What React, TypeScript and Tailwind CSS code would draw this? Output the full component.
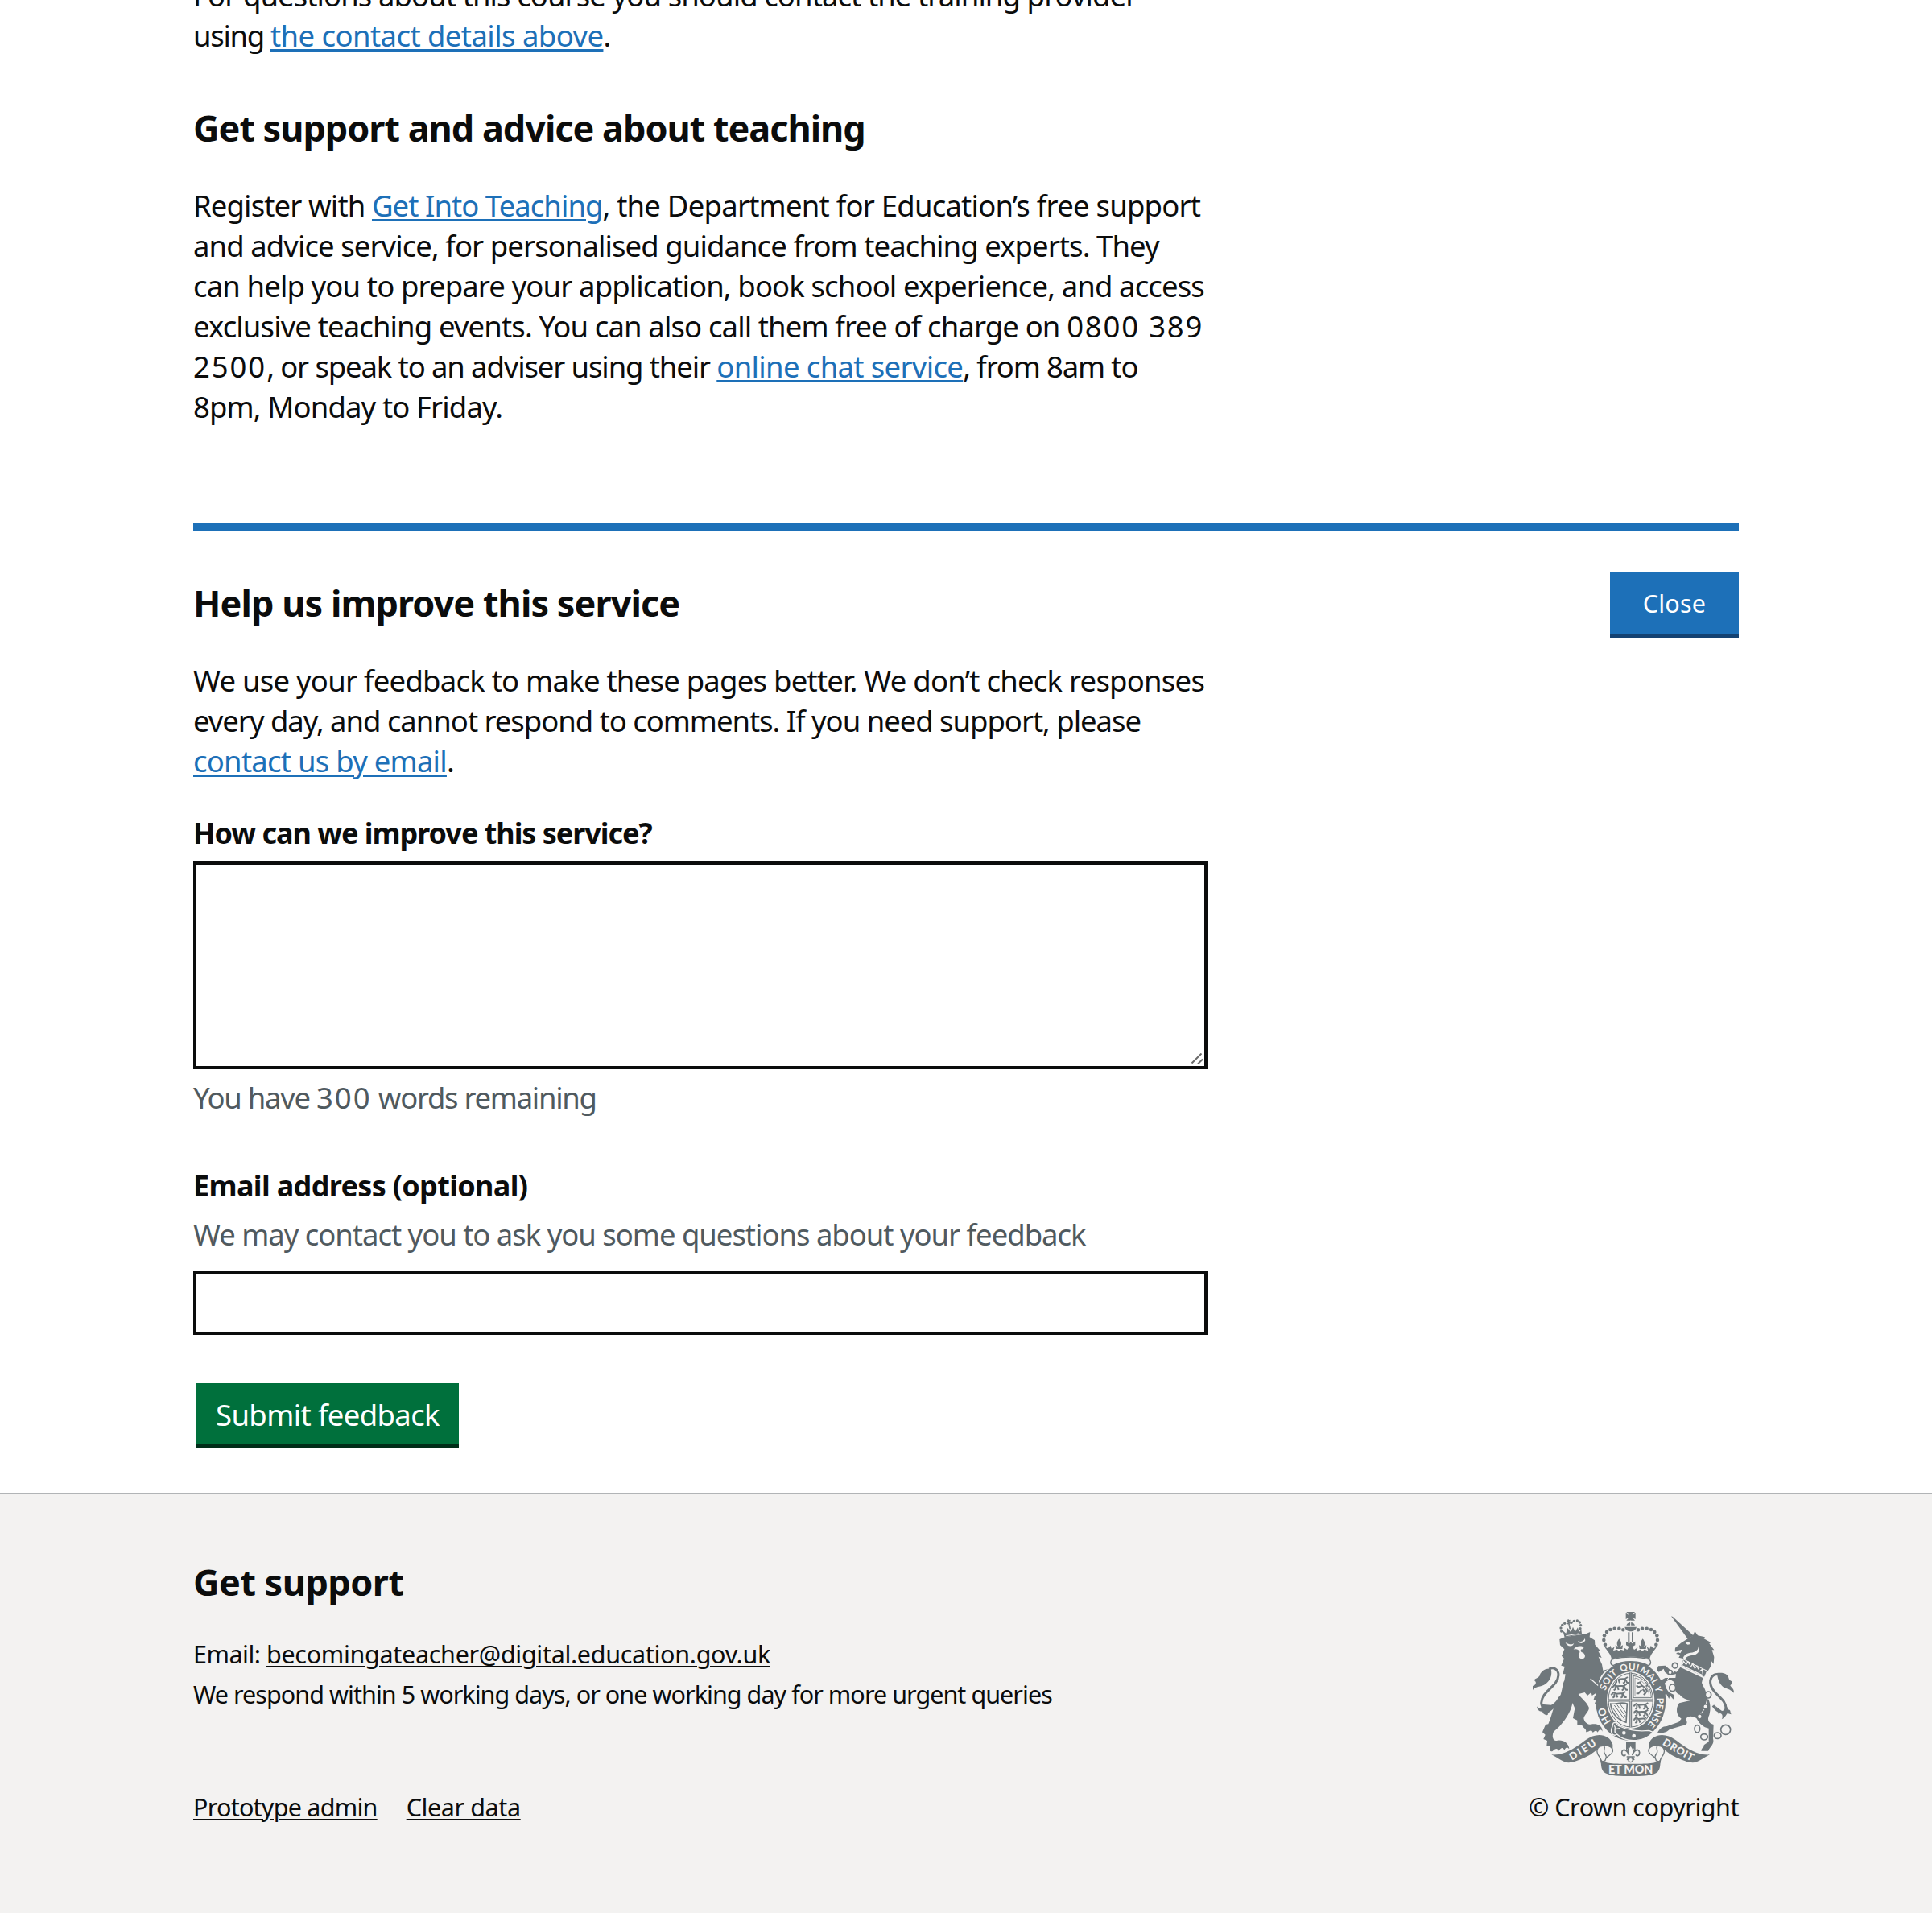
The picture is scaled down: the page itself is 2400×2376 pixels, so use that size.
import type { ReactNode } from "react";

const G = "#6f777b";
const W = "#f3f2f1";

const CROWN_BEADS: [number, number][] = [
  [342, 188], [337, 171], [339, 154], [348, 141], [361, 132], [377, 128], [394, 128], [409, 133],
];

const CHAIN: [number, number, number, number][] = [
  [602, 266, 10, 10], [584, 292, 8, 8], [593, 349, 12, 13], [726, 375, 11, 12], [716, 419, 9, 9],
  [694, 456, 9, 9], [685, 502, 10, 14], [711, 532, 13, 11], [761, 527, 13, 11], [791, 505, 18, 18],
];

function Passant({ x, y }: { x: number; y: number }) {
  return (
    <path
      transform={`translate(${x} ${y})`}
      d="M0 6 l8 -6 l8 5 l26 -2 l10 -6 m-42 8 v11 l-6 4 m14 -13 l4 12 m18 -14 v12 l-6 3 m8 -16 l8 14 l6 0 m-52 -14 l-6 6"
    />
  );
}

function Crest() {
  return (
    <svg width="260" height="210" viewBox="60 60 780 630" fill={G} aria-hidden="true">
      {/* lion: tail */}
      <path d="M175 385 C150 425 105 440 104 405 C106 360 165 345 168 302 C168 280 150 270 133 279" fill="none" stroke={G} strokeWidth="9" />
      <path d="M140 278 C115 275 100 292 98 304 C88 318 74 314 80 324 C88 328 82 340 72 342 L72 358 C76 345 100 345 114 338 C138 325 146 300 140 278 Z" />
      <path d="M104 410 C112 425 90 428 87 418 C88 434 102 440 108 436 C108 446 120 452 128 450 C126 440 150 432 160 415 Z" />
      {/* lion: body */}
      <path d="M172 168 L192 160 L270 148 L286 141 L284 160 L303 172 L304 188 L323 210 L315 210 L329 237 L317 233 L330 262 L334 284 L352 280 C334 292 326 304 318 325 L335 360 L346 404 L340 428 L328 415 L324 424 L312 419 L317 405 L303 411 L307 395 L298 396 L302 383 L312 366 L293 378 L290 366 L276 378 L266 366 L242 372 C252 388 276 404 282 424 C280 440 266 448 262 462 C264 478 280 490 294 484 C310 482 331 486 332 512 C325 500 320 504 314 515 C308 505 302 510 296 516 C290 500 280 515 270 514 C274 500 260 500 256 488 L238 486 L238 470 L222 462 L229 425 L220 405 C216 440 180 490 150 512 C142 530 148 548 160 546 C180 540 207 552 208 577 C200 568 196 570 190 581 C184 568 178 572 168 584 C165 572 156 574 146 585 C136 590 132 576 138 564 L124 564 L126 546 L112 540 L119 524 L108 514 L120 486 L130 484 C148 440 152 400 176 375 C184 350 184 330 190 322 L194 298 L184 298 L191 270 L178 266 L189 240 L180 230 L190 205 L174 190 Z" />
      <path d="M194 180 C208 188 218 190 226 182 L222 190 C212 198 198 192 194 180 Z M240 174 C250 180 262 176 266 165 L268 172 C262 186 246 186 240 174 Z M224 206 C232 194 252 190 262 198 L260 208 C256 200 246 210 254 216 C270 220 272 240 256 241 C240 240 240 222 248 216 C242 204 234 204 224 206 Z" fill={W} />
      <path d="M287 315 L322 346 L332 362" stroke={W} strokeWidth="4" fill="none" />
      {/* lion: crown */}
      <path d="M191 161 L184 136 L196 146 L202 126 L214 142 L222 122 L230 140 L240 124 L245 142 L253 132 L255 148 Z" />
      <path d="M196 155 L244 147" stroke={W} strokeWidth="3" />
      <path d="M199 101 L212 98 M204 94 L208 116 M200 110 L212 107 M208 116 L211 130" stroke={G} strokeWidth="5" />
      {[[179, 138], [177, 126], [182, 115], [191, 109], [216, 106], [226, 100], [238, 99], [247, 105], [251, 116], [249, 128]].map(([x, y]) => (
        <circle key={`${x}-${y}`} cx={x} cy={y} r="5" />
      ))}

      {/* imperial crown */}
      <path d="M421 66 H453 L443 78 L455 71 V93 L443 86 L453 98 H421 L431 86 L419 93 V71 L431 78 Z" />
      <path d="M421 116 A17 17 0 0 1 453 116 Z M415 122 H459 C456 144 418 144 415 122 Z" />
      <path d="M437 98 V118" stroke={W} strokeWidth="3" />
      <path d="M430 142 V178 M444 142 V178" stroke={G} strokeWidth="6" />
      {CROWN_BEADS.map(([x, y]) => (
        <g key={`${x}-${y}`}>
          <circle cx={x} cy={y} r="6.8" />
          <circle cx={874 - x} cy={y} r="6.8" />
        </g>
      ))}
      <path d="M340 196 L352 202 L362 192 L366 204 L377 196 L372 211 L386 206 L394 213 L400 206 L414 211 L411 199 L424 207 L431 196 L420 190 V176 L432 184 L437 176 L442 184 L454 176 V190 L443 196 L450 207 L463 199 L460 211 L474 206 L480 213 L488 206 L502 211 L497 196 L508 204 L512 192 L522 202 L534 196 C526 212 512 220 508 242 C470 230 404 230 366 242 C362 220 348 212 340 196 Z" />
      <path d="M394 166 C404 178 404 190 397 196 L408 190 L406 204 H382 L380 190 L391 196 C384 190 384 178 394 166 Z M482 166 C492 178 492 190 485 196 L496 190 L494 204 H470 L468 190 L479 196 C472 190 472 178 482 166 Z" />

      {/* garter */}
      <ellipse cx="437" cy="397" rx="131" ry="149" />
      <path d="M372 266 C358 262 360 242 376 241 C410 232 464 232 498 241 C514 242 516 262 502 266 C466 246 408 246 372 266 Z" fill={W} stroke={G} strokeWidth="4" />
      <ellipse cx="437" cy="395" rx="89" ry="106" fill={W} />
      <ellipse cx="437" cy="395" rx="83" ry="100" fill="none" stroke={G} strokeWidth="3" />
      <path d="M437 292 V496 M352 396 H522" stroke={G} strokeWidth="9" />
      <path d="M437 292 V496 M352 396 H522" stroke={W} strokeWidth="2" />
      <defs>
        <clipPath id="arms"><ellipse cx="437" cy="395" rx="80" ry="97" /></clipPath>
        <path id="motto" pathLength="100" d="M437 511 A98 114 0 0 1 437 283 A98 114 0 0 1 437 511" />
      </defs>
      <g clipPath="url(#arms)" fill="none" stroke={G} strokeWidth="6" strokeLinejoin="round">
        <Passant x={374} y={312} /><Passant x={370} y={338} /><Passant x={366} y={366} />
        <Passant x={450} y={408} /><Passant x={450} y={434} /><Passant x={450} y={460} />
        <path d="M447 304 V386 H514 C514 350 490 308 447 304 Z" strokeWidth="3" />
        <path d="M453 312 V380 H506 C506 352 484 318 453 312 Z" strokeWidth="2" />
        <path d="M462 332 l10 -4 l6 12 l12 8 l8 12 l-8 12 m-12 -30 l-12 4 l-8 -6 m20 16 l-12 14 l-8 0 m24 -16 l10 12 l-6 10 m10 -32 l6 -10 l-8 -8" />
        <path d="M362 408 C380 412 398 400 424 408 L420 478 C396 470 366 450 362 408 Z" strokeWidth="5" />
        <path d="M376 414 L414 466 M386 412 L418 456 M398 410 L420 442 M370 424 L402 468" strokeWidth="3" />
      </g>
      <g fill={W} fontSize="35" fontWeight="700" fontFamily="Lato, sans-serif" textAnchor="middle">
        <text fontSize="38"><textPath href="#motto" startOffset="17">HO</textPath></text>
        <text><textPath href="#motto" startOffset="36.5">SOIT</textPath></text>
        <text><textPath href="#motto" startOffset="49.3">QUI</textPath></text>
        <text><textPath href="#motto" startOffset="60.6">MAL</textPath></text>
        <text><textPath href="#motto" startOffset="69">Y</textPath></text>
        <text><textPath href="#motto" startOffset="81.5">PENSE</textPath></text>
      </g>
      {/* buckle and strap */}
      <path d="M366 500 C374 488 366 478 378 478 C388 480 384 490 396 492 C430 508 466 512 506 508 L520 514 C490 552 420 556 386 522 C376 530 360 524 366 500 Z" stroke={W} strokeWidth="4" />
      <path d="M376 490 C384 498 374 508 380 518 M376 504 L396 500" stroke={W} strokeWidth="4" fill="none" />
      <circle cx="412" cy="517" r="7" fill={W} />
      <circle cx="449" cy="528" r="7" fill={W} />
      <path d="M302 382 L320 370 L334 366 L348 402 L341 428 L329 418 L322 426 L312 419 L317 407 L303 411 L308 395 Z" />

      {/* unicorn: tail */}
      <path d="M768 299 C735 294 727 325 740 350 C756 380 792 392 792 425 C788 450 760 440 744 415" fill="none" stroke={G} strokeWidth="9" />
      <path d="M758 294 C784 290 800 298 802 312 C806 328 818 318 814 334 L808 340 C812 350 822 350 822 368 C808 352 790 352 780 344 C764 330 762 312 758 294 Z" />
      <path d="M744 410 C760 425 766 436 764 446 C780 438 782 460 776 466 C790 460 792 448 798 444 L812 448 C806 438 812 432 800 430 L794 416 L784 440 Z" />
      {/* unicorn: head */}
      <path d="M588 82 L594 84 L672 155 L650 167 Z" />
      <path d="M650 166 L668 156 L676 138 L687 154 L714 160 L710 166 L736 180 L730 184 L748 208 L740 208 L748 234 L746 260 L738 250 L735 270 L724 288 L632 240 L616 236 L622 226 L606 222 L616 214 L602 214 L603 200 L624 182 Z" />
      <path d="M641 183 C648 178 658 178 660 186 L650 188 Z M632 238 C640 214 664 222 680 212 C690 206 690 196 688 192 C698 210 688 222 676 226 C660 230 648 228 640 243 Z M604 212 L630 206 L622 220 Z" fill={W} />
      {/* unicorn: collar */}
      <path d="M632 242 L722 286 L712 310 L624 268 Z" stroke={W} strokeWidth="3" />
      <path d="M630 262 L634 250 L644 262 L650 252 L658 262 M660 272 L668 260 L676 276 L684 268 L690 280 M694 288 L704 280 L706 298 M628 266 L708 304" stroke={W} strokeWidth="4" fill="none" />
      {/* unicorn: body */}
      <path d="M622 272 L706 312 L702 330 C708 348 718 354 720 380 C736 400 736 430 730 450 C720 470 730 482 746 486 L744 538 C750 560 734 566 726 584 L700 584 C702 570 712 572 710 562 L728 550 L728 500 C708 496 694 484 682 462 C666 452 650 452 642 466 C652 480 646 488 630 490 L582 504 C570 516 556 518 536 518 C544 502 556 492 572 492 L616 476 L626 464 C606 452 604 424 618 406 L660 396 C640 392 624 382 620 374 C600 372 602 342 600 328 L584 318 C574 322 568 326 564 332 L570 352 L580 366 L600 376 L596 392 L584 378 L580 390 L570 372 L562 374 L558 352 L546 342 L544 324 L566 312 L604 312 L606 298 L580 302 L564 290 L560 278 L542 290 L534 282 L540 268 L566 266 L584 282 L608 290 Z" />
      <path d="M606 276 L574 318 M598 338 L578 366 M724 387 L718 408 M712 428 L698 446" stroke={W} strokeWidth="3" fill="none" />
      {CHAIN.map(([x, y, rx, ry]) => (
        <ellipse key={`${x}-${y}`} cx={x} cy={y} rx={rx} ry={ry} fill={W} stroke={G} strokeWidth="5" />
      ))}

      {/* ribbon */}
      {[undefined, "translate(874 0) scale(-1 1)"].map((flip) => (
        <g key={flip ?? "left"} transform={flip}>
          <path d="M142 598 C196 602 240 564 270 543 C308 514 358 520 370 560 L370 580 C360 568 350 566 340 568 C318 572 304 586 290 596 C260 612 236 624 206 628 C186 628 170 612 142 598 Z" />
          <path d="M338 564 C356 562 372 572 370 586 C366 602 344 602 342 620 L328 626 C328 606 308 600 312 580 C316 566 332 564 338 566 C346 572 330 584 342 596 C350 606 344 612 342 620" fill={W} stroke={G} strokeWidth="4" />
        </g>
      ))}
      <path d="M324 610 C330 636 390 632 437 632 C484 632 544 636 550 610 C546 640 548 650 538 662 C520 678 470 678 437 678 C404 678 354 678 336 662 C326 650 328 640 324 610 Z" />
      <g fill={W} fontWeight="900" fontFamily="Lato, sans-serif" textAnchor="middle">
        <text x="437" y="670" fontSize="43" textLength="166">ET MON</text>
        <text transform="translate(265 591) rotate(-32)" fontSize="38" textLength="110">DIEU</text>
        <text transform="translate(608 591) rotate(30)" fontSize="38" textLength="126">DROIT</text>
      </g>

      {/* fleur-de-lis */}
      <path d="M420 550 H455 V584 L437 560 L420 584 Z" />
      <path d="M437 562 C450 580 450 588 443 600 C450 578 468 574 470 590 C470 602 460 606 456 598 M437 562 C424 580 424 588 431 600 C424 578 406 574 404 590 C404 602 414 606 418 598 M422 606 H452 M432 606 L424 618 M442 606 L450 618" fill="none" stroke={G} strokeWidth="5" />
      <circle cx="437" cy="618" r="8" fill="none" stroke={G} strokeWidth="4" />
    </svg>
  );
}

function A({ className, children }: { className: string; children: ReactNode }) {
  return (
    <a href="#" className={`text-[#1d70b8] underline decoration-[2.5px] underline-offset-[3px] ${className}`}>
      {children}
    </a>
  );
}

export default function App() {
  return (
    <div className="h-[2376px] w-[2400px] overflow-hidden bg-white font-['Noto_Sans',sans-serif] text-[36.5px] leading-[50px] whitespace-pre text-[#0b0c0c]">
      <main className="mx-auto h-[1854px] w-[1920px]">
        <section className="h-[650px] overflow-hidden">
          <p className="-mt-[31px]">
            <span className="block tracking-[-0.92px]">For questions about this course you should contact the training provider</span>
            <span className="block">
              <span className="tracking-[-1.33px]">using </span>
              <A className="tracking-[-0.57px]">the contact details above</A>.
            </span>
          </p>
          <h2 className="mt-[60px] text-[45px] leading-[60px] font-bold tracking-[-1.02px]">Get support and advice about teaching</h2>
          <p className="mt-[41px]">
            <span className="block">
              <span className="tracking-[-0.88px]">Register with </span>
              <A className="tracking-[-0.96px]">Get Into Teaching</A>
              <span className="tracking-[-0.78px]">, the Department for Education’s free support</span>
            </span>
            <span className="block tracking-[-0.93px]">and advice service, for personalised guidance from teaching experts. They</span>
            <span className="block tracking-[-0.88px]">can help you to prepare your application, book school experience, and access</span>
            <span className="block tracking-[-0.88px]">
              exclusive teaching events. You can also call them free of charge on <span className="tracking-[1.8px]">0800 389</span>
            </span>
            <span className="block tracking-[-1.13px]">
              <span className="tracking-[1.9px]">2500</span>, or speak to an adviser using their{" "}
              <A className="tracking-[-0.66px]">online chat service</A>
              <span className="tracking-[-1.16px]">, from 8am to</span>
            </span>
            <span className="block tracking-[-0.88px]">8pm, Monday to Friday.</span>
          </p>
        </section>

        <section className="border-t-[10px] border-[#1d70b8] pt-[50px]">
          <div className="flex h-[110px] items-start justify-between">
            <h2 className="mt-[9px] text-[45px] leading-[60px] font-bold tracking-[-0.93px]">Help us improve this service</h2>
            <button className="flex h-[82px] w-[160px] items-center justify-center border-b-4 border-[#144272] bg-[#1d70b8] text-[30.5px] leading-[40px] tracking-[0.2px] text-white">
              Close
            </button>
          </div>
          <form className="w-[1260px]">
            <p>
              <span className="block tracking-[-0.77px]">We use your feedback to make these pages better. We don’t check responses</span>
              <span className="block tracking-[-1.04px]">every day, and cannot respond to comments. If you need support, please</span>
              <span className="block">
                <A className="tracking-[-0.76px]">contact us by email</A>.
              </span>
            </p>
            <label className="mt-[40px] block text-[36px] font-bold tracking-[-1.03px]">How can we improve this service?</label>
            <div className="relative mt-[10px] h-[258px] border-4 border-[#0b0c0c]">
              <svg className="absolute right-0.5 bottom-0.5" width="14" height="14" viewBox="0 0 14 14" stroke="#6b6b6b" strokeWidth="2">
                <path d="M0.5 12.5 L12.5 0.5 M8 13.5 L14 7.5" />
              </svg>
            </div>
            <p className="mt-[10px] tracking-[-1.3px] text-[#505a5f]">
              You have <span className="tracking-[2px]">300</span> words remaining
            </p>
            <label className="mt-[60px] block text-[36px] font-bold tracking-[-0.67px]">Email address (optional)</label>
            <p className="mt-[10px] tracking-[-1.03px] text-[#505a5f]">We may contact you to ask you some questions about your feedback</p>
            <input className="mt-5 block h-[80px] w-full border-4 border-[#0b0c0c] bg-white" />
            <button className="mt-[60px] ml-1 flex h-[80px] w-[326px] items-center justify-center border-b-4 border-[#002d18] bg-[#00703c] pt-px tracking-[-0.63px] text-white">
              Submit feedback
            </button>
          </form>
        </section>
      </main>

      <footer className="h-[522px] border-t-2 border-[#b1b4b6] bg-[#f3f2f1] text-[30.5px]">
        <div className="mx-auto flex w-[1920px] justify-between">
          <div className="pt-[79px]">
            <h2 className="text-[45px] leading-[60px] font-bold tracking-[-0.52px]">Get support</h2>
            <p className="mt-[34px]">
              <span className="tracking-[-0.49px]">Email: </span>
              <a href="#" className="tracking-[-0.31px] underline decoration-2 underline-offset-[3px]">becomingateacher@digital.education.gov.uk</a>
            </p>
            <p className="tracking-[-0.95px]">We respond within 5 working days, or one working day for more urgent queries</p>
            <div className="mt-[90px] flex gap-9">
              <a href="#" className="tracking-[-0.75px] underline decoration-2 underline-offset-[3px]">Prototype admin</a>
              <a href="#" className="tracking-[-0.4px] underline decoration-2 underline-offset-[3px]">Clear data</a>
            </div>
          </div>
          <div className="flex flex-col items-end pt-[144px]">
            <Crest />
            <a href="#" className="mt-[9px] tracking-[-0.47px]">© Crown copyright</a>
          </div>
        </div>
      </footer>
    </div>
  );
}
